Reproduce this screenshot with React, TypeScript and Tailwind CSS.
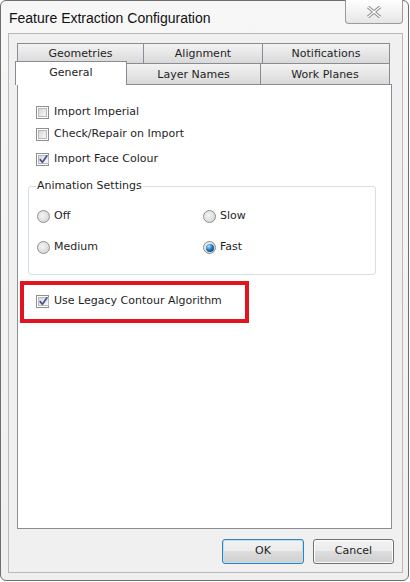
import React from 'react';

const font = { fontFamily: '"DejaVu Sans", Verdana, sans-serif' };

function CheckBox({ checked }: { checked?: boolean }) {
  return (
    <span className="w-[13px] h-[13px] border border-[#8e8f8f] p-px bg-white shrink-0 flex">
      <span className="flex-1 bg-gradient-to-br from-[#d8d8d8] to-[#f7f7f7] border border-[#b8b8b8] flex items-center justify-center">
        {checked && (
          <svg width="9" height="9" viewBox="0 0 9 9" className="overflow-visible">
            <path d="M1.2 4.6 L3.4 7.2 L7.8 1" fill="none" stroke="#3f5590" strokeWidth="1.7" strokeLinecap="round" strokeLinejoin="round" />
          </svg>
        )}
      </span>
    </span>
  );
}

function Radio({ checked }: { checked?: boolean }) {
  return (
    <span className="w-[13px] h-[13px] rounded-full border border-[#8e8f8f] bg-[radial-gradient(circle_at_40%_40%,#f4f4f4,#cfcfcf)] shrink-0 flex items-center justify-center">
      {checked && (
        <span className="w-[8px] h-[8px] rounded-full bg-[radial-gradient(circle_at_35%_30%,#a6e4ff,#1a6fb4_50%,#0a3569)]" />
      )}
    </span>
  );
}

function Tab({ label, w, first }: { label: string; w: string; first?: boolean }) {
  return (
    <div
      className={`${w} ${first ? '' : '-ml-px'} h-full border border-b-0 border-[#898c95] bg-gradient-to-b from-[#f3f3f3] to-[#d9d9d9] flex items-center justify-center pt-[2px] text-[11px] text-[#1e1e1e]`}
    >
      {label}
    </div>
  );
}

export default function App() {
  return (
    <div className="w-[410px] h-[582px] bg-white" style={font}>
      <div className="w-[409px] h-[581px] border border-[#6e6e6e] rounded-[6px] bg-gradient-to-b from-[#f7f7f7] to-[#efefef] flex flex-col">
        {/* title bar */}
        <div className="h-[32px] flex items-start justify-between pl-[8px]">
          <div className="mt-[8px] text-[14px] leading-[18px] text-[#111]" style={{ fontFamily: '"Liberation Sans", Arial, sans-serif' }}>
            Feature Extraction Configuration
          </div>
          <div className="-mt-px mr-[5px] w-[58px] h-[24px] border border-[#9a9a9a] border-t-0 rounded-b-[4px] bg-gradient-to-b from-white to-[#e6e6e6] flex items-center justify-center">
            <svg width="16" height="12" viewBox="0 0 16 12">
              <path d="M2 1 L8 6 L14 1 M2 11 L8 6 L14 11" fill="none" stroke="#8a8a8a" strokeWidth="3.2" />
              <path d="M2 1 L8 6 L14 1 M2 11 L8 6 L14 11" fill="none" stroke="#ffffff" strokeWidth="1.3" />
            </svg>
          </div>
        </div>

        {/* client area */}
        <div className="ml-[7px] mr-[5px] mb-[7px] flex-1 border border-[#b9b9b9] bg-[#f0f0f0] flex flex-col">
          <div className="ml-[8px] mt-[9px] w-[375px] flex flex-col">
            <div className="flex h-[20px]">
              <Tab label="Geometries" w="w-[127px]" first />
              <Tab label="Alignment" w="w-[120px]" />
              <Tab label="Notifications" w="w-[128px]" />
            </div>
            <div className="flex items-end h-[21px]">
              <div className="-ml-[2px] -mb-px w-[112px] h-[24px] border border-b-0 border-[#898c95] bg-white relative z-10 flex items-start justify-center pt-[3px] text-[11px] text-[#1e1e1e]">
                General
              </div>
              <Tab label="Layer Names" w="w-[135px]" />
              <Tab label="Work Planes" w="w-[130px]" />
            </div>
            <div className="h-[445px] border border-[#898c95] bg-white flex flex-col text-[11px] text-[#1e1e1e]">
              <div className="pl-[18px] pt-[20px] flex flex-col gap-[8px]">
                <div className="flex items-center gap-[5px] h-[14px]">
                  <CheckBox />
                  <span>Import Imperial</span>
                </div>
                <div className="flex items-center gap-[5px] h-[14px]">
                  <CheckBox />
                  <span>Check/Repair on Import</span>
                </div>
                <div className="flex items-center gap-[5px] h-[14px] mt-[3px]">
                  <CheckBox checked />
                  <span>Import Face Colour</span>
                </div>
              </div>

              <fieldset className="ml-[10px] mt-[13px] w-[348px] h-[96px] border border-[#d5dfe5] rounded-[3px] pl-[8px]">
                <legend className="ml-[-1px] px-[1px] leading-[14px]">Animation Settings</legend>
                <div className="grid grid-cols-[166px_1fr] gap-y-[18px] mt-[17px]">
                  <div className="flex items-center gap-[4px] h-[13px]">
                    <Radio />
                    <span>Off</span>
                  </div>
                  <div className="flex items-center gap-[4px] h-[13px]">
                    <Radio />
                    <span>Slow</span>
                  </div>
                  <div className="flex items-center gap-[4px] h-[13px]">
                    <Radio />
                    <span>Medium</span>
                  </div>
                  <div className="flex items-center gap-[4px] h-[13px]">
                    <Radio checked />
                    <span>Fast</span>
                  </div>
                </div>
              </fieldset>

              <div className="ml-[2px] mt-[6px] w-[229px] h-[42px] border-[4px] border-[#e3141f] pl-[12px] pt-[9px]">
                <div className="flex items-center gap-[5px] h-[14px]">
                  <CheckBox checked />
                  <span>Use Legacy Contour Algorithm</span>
                </div>
              </div>
            </div>
          </div>

          <div className="mt-[10px] mr-[8px] flex justify-end gap-[9px] text-[11px] text-[#1e1e1e]">
            <button className="w-[82px] h-[25px] rounded-[3px] border border-[#3c7fb1] shadow-[inset_0_0_0_1px_#b6e3fb] bg-[linear-gradient(#f2f2f2,#ebebeb_50%,#dddddd_50%,#cfcfcf)] flex items-center justify-center">
              OK
            </button>
            <button className="w-[81px] h-[25px] rounded-[3px] border border-[#707070] shadow-[inset_0_0_0_1px_#fcfcfc] bg-[linear-gradient(#f2f2f2,#ebebeb_50%,#dddddd_50%,#cfcfcf)] flex items-center justify-center">
              Cancel
            </button>
          </div>
        </div>
      </div>
    </div>
  );
}
